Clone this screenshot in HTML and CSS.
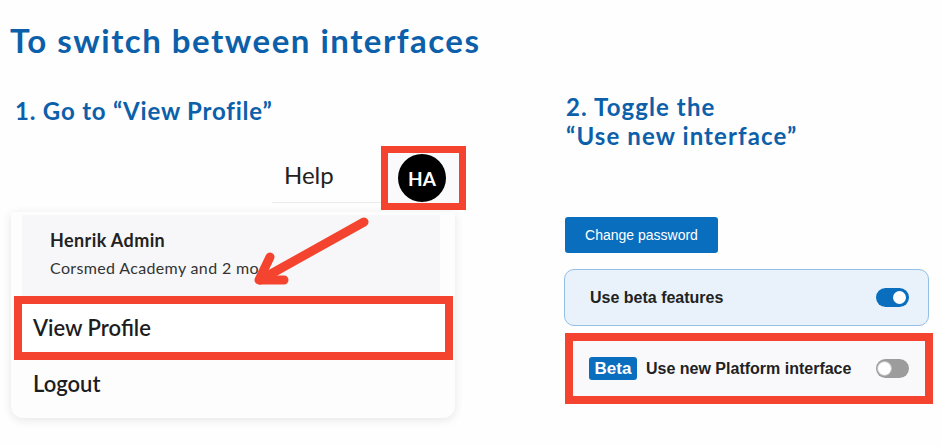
FILE: index.html
```html
<!DOCTYPE html>
<html lang="en">
<head>
<meta charset="utf-8">
<title>To switch between interfaces</title>
<link rel="stylesheet" href="styles.css">
</head>
<body>
<main class="page">
  <h1 class="title">To switch between interfaces</h1>
  <div class="steps">
    <section class="step step-one">
      <h2 class="step-title step-title-one">1. Go to “View Profile”</h2>
      <div class="nav">
        <div class="nav-help">Help</div>
        <div class="avatar-box"><div class="avatar">HA</div></div>
      </div>
      <div class="menu">
        <div class="menu-header">
          <div class="menu-name">Henrik Admin</div>
          <div class="menu-org">Corsmed Academy and 2 mo</div>
        </div>
        <div class="menu-item menu-item-hl">View Profile</div>
        <div class="menu-item menu-logout">Logout</div>
      </div>
    </section>
    <section class="step step-two">
      <h2 class="step-title step-title-two">2. Toggle the<br>“Use new interface”</h2>
      <button class="btn">Change password</button>
      <div class="panel">
        <span class="panel-label">Use beta features</span>
        <span class="toggle toggle-on"><span class="knob"></span></span>
      </div>
      <div class="hl-row">
        <span class="badge">Beta</span>
        <span class="panel-label">Use new Platform interface</span>
        <span class="toggle toggle-off"><span class="knob"></span></span>
      </div>
    </section>
  </div>
  <svg class="arrow" width="942" height="446" viewBox="0 0 942 446">
    <g fill="none" stroke="#f4442f" stroke-width="9" stroke-linecap="round" stroke-linejoin="round">
      <path d="M364 222 L260 280"/>
      <path d="M270 257 L259 280 L284 280"/>
    </g>
  </svg>
</main>
</body>
</html>
```
FILE: styles.css
```css
html, body {
  margin: 0;
  padding: 0;
  background: #fefefe;
}
.page {
  position: relative;
  width: 942px;
  height: 446px;
  overflow: hidden;
  font-family: "Lato", "Liberation Sans", sans-serif;
}
.title {
  margin: 20px 0 0 10px;
  font-size: 33px;
  line-height: 40px;
  letter-spacing: 1.5px;
  font-weight: 700;
  color: #0c60aa;
}
.steps {
  display: flex;
  margin-top: 32px;
}
.step-one {
  width: 564px;
  flex: none;
}
.step-two {
  flex: 1;
  display: flex;
  flex-direction: column;
  align-items: flex-start;
}
.step-title {
  margin: 0;
  font-size: 24px;
  line-height: 29px;
  font-weight: 700;
  color: #0c60aa;
}
.step-title-one {
  margin: 4px 0 0 15px;
  letter-spacing: 0.8px;
}
.step-title-two {
  margin: 0 0 0 2px;
  letter-spacing: 1.1px;
}
/* left mock */
.nav {
  display: flex;
  align-items: flex-start;
  margin: 21px 0 0 272px;
}
.nav-help {
  width: 109px;
  height: 57px;
  box-sizing: border-box;
  border-bottom: 1px solid #ececf0;
  padding-left: 12px;
  display: flex;
  align-items: center;
  font-size: 24px;
  color: #222;
}
.avatar-box {
  width: 85px;
  height: 64px;
  box-sizing: border-box;
  border: 7px solid #f4442f;
  background: #fafafc;
  display: flex;
  align-items: center;
  justify-content: center;
}
.avatar {
  width: 48px;
  height: 48px;
  border-radius: 50%;
  background: #000;
  color: #fff;
  font-weight: 700;
  font-size: 19px;
  display: flex;
  align-items: center;
  justify-content: center;
  margin-right: 3px;
}
.menu {
  margin: 2px 0 0 11px;
  width: 444px;
  height: 206px;
  background: #fdfdfd;
  border-radius: 0 0 12px 12px;
  box-shadow: 0 2px 10px rgba(0, 0, 0, 0.10);
  display: flex;
  flex-direction: column;
}
.menu-header {
  margin: 3px 15px 0 11px;
  height: 81px;
  box-sizing: border-box;
  padding: 14px 0 0 28px;
  background: #f7f7f9;
  color: #222;
}
.menu-name {
  font-size: 18px;
  line-height: 22px;
  letter-spacing: 0.4px;
  font-weight: 700;
}
.menu-org {
  margin-top: 6px;
  font-size: 16px;
  line-height: 22px;
  letter-spacing: 0.35px;
  color: #333;
}
.menu-item {
  font-size: 22px;
  line-height: 28px;
  font-weight: 600;
  color: #1d1d1f;
}
.menu-item-hl {
  margin: 0 2px 0 3px;
  height: 64px;
  box-sizing: border-box;
  border: 8px solid #f4442f;
  background: #fff;
  padding-left: 11px;
  display: flex;
  align-items: center;
}
.menu-logout {
  padding: 10px 0 0 22px;
}
/* right side */
.btn {
  margin-top: 67px;
  margin-left: 1px;
  width: 153px;
  height: 36px;
  border: 0;
  border-radius: 3px;
  background: #0a6ebe;
  color: #fff;
  font-family: "Liberation Sans", sans-serif;
  font-size: 14px;
  padding: 0;
}
.panel {
  margin-top: 16px;
  width: 365px;
  height: 57px;
  box-sizing: border-box;
  border: 1px solid #93bee6;
  border-radius: 10px;
  background: #e9f2fb;
  padding: 0 19px 0 25px;
  display: flex;
  align-items: center;
  justify-content: space-between;
}
.panel-label {
  font-family: "Liberation Sans", sans-serif;
  font-size: 16px;
  font-weight: 700;
  color: #222;
}
.toggle {
  width: 33px;
  height: 19px;
  border-radius: 10px;
  box-sizing: border-box;
  display: flex;
  align-items: center;
  padding: 0 3px;
}
.toggle-on {
  background: #0a6ebe;
  justify-content: flex-end;
}
.toggle-off {
  background: #9c9c9c;
  justify-content: flex-start;
  padding: 0 1px;
}
.knob {
  width: 13px;
  height: 13px;
  border-radius: 50%;
  background: #fff;
}
.toggle-off .knob {
  width: 15px;
  height: 15px;
  border: 1px solid #bdbdbd;
  box-sizing: border-box;
}
.hl-row {
  margin-top: 7px;
  margin-left: 1px;
  width: 368px;
  height: 71px;
  box-sizing: border-box;
  border: 8px solid #f4442f;
  background: #f9f9fb;
  padding: 0 16px;
  display: flex;
  align-items: center;
}
.badge {
  width: 48px;
  height: 23px;
  border-radius: 3px;
  background: #0a6ebe;
  color: #fff;
  font-family: "Liberation Sans", sans-serif;
  font-weight: 700;
  font-size: 17px;
  display: flex;
  align-items: center;
  justify-content: center;
  margin-right: 9px;
}
.hl-row .toggle {
  margin-left: auto;
}
.arrow {
  position: absolute;
  left: 0;
  top: 0;
  pointer-events: none;
}
```
